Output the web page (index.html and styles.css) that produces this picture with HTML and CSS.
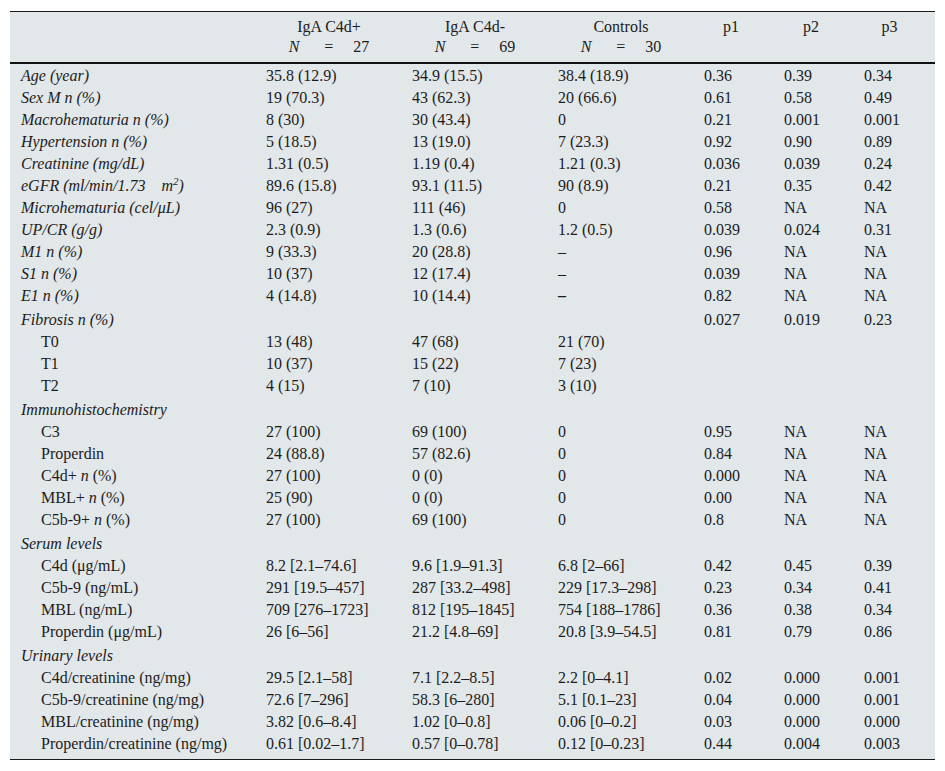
FILE: index.html
```html
<!DOCTYPE html>
<html>
<head>
<meta charset="utf-8">
<link rel="stylesheet" href="styles.css">
</head>
<body>
<table class="tbl">
<colgroup>
<col class="c-label"><col class="c-grp"><col class="c-grp"><col class="c-grp"><col class="c-p"><col class="c-p"><col class="c-p3">
</colgroup>
<thead>
<tr>
<th></th>
<th class="h-grp">IgA C4d+<br><i>N</i><span class="eq">=</span>27</th>
<th class="h-grp">IgA C4d-<br><i>N</i><span class="eq">=</span>69</th>
<th class="h-grp">Controls<br><i>N</i><span class="eq">=</span>30</th>
<th class="h-p">p1<br>&nbsp;</th>
<th class="h-p">p2<br>&nbsp;</th>
<th class="h-p">p3<br>&nbsp;</th>
</tr>
</thead>
<tbody>
<tr class="first"><td class="lbl"><i>Age (year)</i></td><td>35.8 (12.9)</td><td>34.9 (15.5)</td><td>38.4 (18.9)</td><td>0.36</td><td>0.39</td><td>0.34</td></tr>
<tr><td class="lbl"><i>Sex M n (%)</i></td><td>19 (70.3)</td><td>43 (62.3)</td><td>20 (66.6)</td><td>0.61</td><td>0.58</td><td>0.49</td></tr>
<tr><td class="lbl"><i>Macrohematuria n (%)</i></td><td>8 (30)</td><td>30 (43.4)</td><td>0</td><td>0.21</td><td>0.001</td><td>0.001</td></tr>
<tr><td class="lbl"><i>Hypertension n (%)</i></td><td>5 (18.5)</td><td>13 (19.0)</td><td>7 (23.3)</td><td>0.92</td><td>0.90</td><td>0.89</td></tr>
<tr><td class="lbl"><i>Creatinine (mg/dL)</i></td><td>1.31 (0.5)</td><td>1.19 (0.4)</td><td>1.21 (0.3)</td><td>0.036</td><td>0.039</td><td>0.24</td></tr>
<tr><td class="lbl"><i>eGFR (ml/min/1.73<span class="gap"></span>m<sup>2</sup>)</i></td><td>89.6 (15.8)</td><td>93.1 (11.5)</td><td>90 (8.9)</td><td>0.21</td><td>0.35</td><td>0.42</td></tr>
<tr><td class="lbl"><i>Microhematuria (cel/μL)</i></td><td>96 (27)</td><td>111 (46)</td><td>0</td><td>0.58</td><td>NA</td><td>NA</td></tr>
<tr><td class="lbl"><i>UP/CR (g/g)</i></td><td>2.3 (0.9)</td><td>1.3 (0.6)</td><td>1.2 (0.5)</td><td>0.039</td><td>0.024</td><td>0.31</td></tr>
<tr><td class="lbl"><i>M1 n (%)</i></td><td>9 (33.3)</td><td>20 (28.8)</td><td>–</td><td>0.96</td><td>NA</td><td>NA</td></tr>
<tr><td class="lbl"><i>S1 n (%)</i></td><td>10 (37)</td><td>12 (17.4)</td><td>–</td><td>0.039</td><td>NA</td><td>NA</td></tr>
<tr><td class="lbl"><i>E1 n (%)</i></td><td>4 (14.8)</td><td>10 (14.4)</td><td><b class="dash">–</b></td><td>0.82</td><td>NA</td><td>NA</td></tr>
<tr class="sec"><td class="lbl"><i>Fibrosis n (%)</i></td><td></td><td></td><td></td><td>0.027</td><td>0.019</td><td>0.23</td></tr>
<tr><td class="sub">T0</td><td>13 (48)</td><td>47 (68)</td><td>21 (70)</td><td></td><td></td><td></td></tr>
<tr><td class="sub">T1</td><td>10 (37)</td><td>15 (22)</td><td>7 (23)</td><td></td><td></td><td></td></tr>
<tr><td class="sub">T2</td><td>4 (15)</td><td>7 (10)</td><td>3 (10)</td><td></td><td></td><td></td></tr>
<tr class="sec"><td class="lbl"><i>Immunohistochemistry</i></td><td></td><td></td><td></td><td></td><td></td><td></td></tr>
<tr><td class="sub">C3</td><td>27 (100)</td><td>69 (100)</td><td>0</td><td>0.95</td><td>NA</td><td>NA</td></tr>
<tr><td class="sub">Properdin</td><td>24 (88.8)</td><td>57 (82.6)</td><td>0</td><td>0.84</td><td>NA</td><td>NA</td></tr>
<tr><td class="sub">C4d+ <i>n</i> (%)</td><td>27 (100)</td><td>0 (0)</td><td>0</td><td>0.000</td><td>NA</td><td>NA</td></tr>
<tr><td class="sub">MBL+ <i>n</i> (%)</td><td>25 (90)</td><td>0 (0)</td><td>0</td><td>0.00</td><td>NA</td><td>NA</td></tr>
<tr><td class="sub">C5b-9+ <i>n</i> (%)</td><td>27 (100)</td><td>69 (100)</td><td>0</td><td>0.8</td><td>NA</td><td>NA</td></tr>
<tr class="sec"><td class="lbl"><i>Serum levels</i></td><td></td><td></td><td></td><td></td><td></td><td></td></tr>
<tr><td class="sub">C4d (μg/mL)</td><td>8.2 [2.1–74.6]</td><td>9.6 [1.9–91.3]</td><td>6.8 [2–66]</td><td>0.42</td><td>0.45</td><td>0.39</td></tr>
<tr><td class="sub">C5b-9 (ng/mL)</td><td>291 [19.5–457]</td><td>287 [33.2–498]</td><td>229 [17.3–298]</td><td>0.23</td><td>0.34</td><td>0.41</td></tr>
<tr><td class="sub">MBL (ng/mL)</td><td>709 [276–1723]</td><td>812 [195–1845]</td><td>754 [188–1786]</td><td>0.36</td><td>0.38</td><td>0.34</td></tr>
<tr><td class="sub">Properdin (μg/mL)</td><td>26 [6–56]</td><td>21.2 [4.8–69]</td><td>20.8 [3.9–54.5]</td><td>0.81</td><td>0.79</td><td>0.86</td></tr>
<tr class="sec"><td class="lbl"><i>Urinary levels</i></td><td></td><td></td><td></td><td></td><td></td><td></td></tr>
<tr><td class="sub">C4d/creatinine (ng/mg)</td><td>29.5 [2.1–58]</td><td>7.1 [2.2–8.5]</td><td>2.2 [0–4.1]</td><td>0.02</td><td>0.000</td><td>0.001</td></tr>
<tr><td class="sub">C5b-9/creatinine (ng/mg)</td><td>72.6 [7–296]</td><td>58.3 [6–280]</td><td>5.1 [0.1–23]</td><td>0.04</td><td>0.000</td><td>0.001</td></tr>
<tr><td class="sub">MBL/creatinine (ng/mg)</td><td>3.82 [0.6–8.4]</td><td>1.02 [0–0.8]</td><td>0.06 [0–0.2]</td><td>0.03</td><td>0.000</td><td>0.000</td></tr>
<tr class="last"><td class="sub">Properdin/creatinine (ng/mg)</td><td>0.61 [0.02–1.7]</td><td>0.57 [0–0.78]</td><td>0.12 [0–0.23]</td><td>0.44</td><td>0.004</td><td>0.003</td></tr>
</tbody>
</table>
</body>
</html>
```
FILE: styles.css
```css
html, body {
  margin: 0;
  padding: 0;
  background: #ffffff;
}

body {
  padding: 11px 10px 0 10px;
  font-family: "Liberation Serif", "Times New Roman", serif;
  font-size: 16px;
  color: #1c1c1c;
}

.tbl {
  width: 925px;
  border-collapse: collapse;
  table-layout: fixed;
  background: #e2e7ea;
  border-top: 1px solid #1a1a1a;
  border-bottom: 1px solid #1a1a1a;
}

.c-label { width: 250px; }
.c-grp { width: 146px; }
.c-p { width: 80px; }
.c-p3 { width: 77px; }

.tbl th {
  font-weight: normal;
  line-height: 20px;
  height: 40px;
  padding: 5px 0 5px 0;
  border-bottom: 2px solid #111;
  vertical-align: top;
}

.tbl th.h-grp {
  text-align: center;
  padding-right: 8px;
}

.tbl th.h-p {
  text-align: center;
  padding-right: 14px;
}

.eq {
  display: inline-block;
  margin: 0 20px 0 25px;
}

.tbl td {
  height: 22px;
  line-height: 22px;
  padding: 0 0 0 6px;
  white-space: nowrap;
  vertical-align: top;
}

.tbl tr.first td {
  padding-top: 1px;
}

.tbl tr.sec td {
  padding-top: 2px;
}

.tbl td.lbl {
  padding-left: 11px;
}

.tbl td.sub {
  padding-left: 31px;
}

.tbl tr.last td {
  padding-bottom: 4px;
}

.gap {
  display: inline-block;
  width: 16px;
}

sup {
  font-size: 11px;
  line-height: 0;
  vertical-align: 6px;
}

.dash {
  font-weight: bold;
}
```
